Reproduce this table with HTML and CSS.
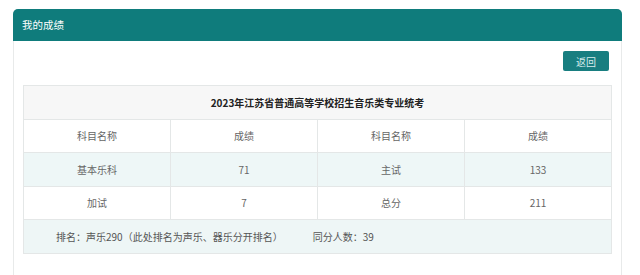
FILE: index.html
```html
<!DOCTYPE html>
<html lang="zh-CN">
<head>
<meta charset="utf-8">
<title>我的成绩</title>
<link rel="stylesheet" href="styles.css">
</head>
<body>
<div class="panel">
  <div class="panel-head">我的成绩</div>
  <div class="panel-body">
    <div class="toolbar"><button class="btn">返回</button></div>
    <table class="score">
      <tr class="title-row"><td colspan="4">2023年江苏省普通高等学校招生音乐类专业统考</td></tr>
      <tr class="head-row"><td>科目名称</td><td>成绩</td><td>科目名称</td><td>成绩</td></tr>
      <tr class="alt"><td>基本乐科</td><td>71</td><td>主试</td><td>133</td></tr>
      <tr><td>加试</td><td>7</td><td>总分</td><td>211</td></tr>
      <tr class="foot-row"><td colspan="4"><span class="rank">排名：声乐290（此处排名为声乐、器乐分开排名）</span><span>同分人数：39</span></td></tr>
    </table>
  </div>
</div>
</body>
</html>
```
FILE: styles.css
```css
html, body {
  margin: 0;
  padding: 0;
  background: #ffffff;
  font-family: "Noto Sans CJK SC", "Noto Sans", sans-serif;
}
body {
  padding: 9px 18px 0 13px;
  height: 275px;
  box-sizing: border-box;
  overflow: hidden;
}
.panel {
  border: 1px solid #e8eaea;
  border-bottom: none;
  border-radius: 5px 5px 0 0;
  height: 266px;
  box-sizing: border-box;
}
.panel-head {
  background: #0f7c7c;
  color: #ffffff;
  font-size: 10.5px;
  height: 32px;
  line-height: 32px;
  padding-left: 9px;
  margin: -1px -1px 0 -1px;
  border-radius: 5px 5px 0 0;
}
.panel-body {
  padding: 10px 9px 0 9px;
}
.toolbar {
  display: flex;
  justify-content: flex-end;
  padding-right: 3px;
  margin-bottom: 14px;
}
.btn {
  background: #187e80;
  color: #d6ecec;
  border: none;
  border-radius: 2px;
  width: 46px;
  height: 20px;
  font-family: inherit;
  font-size: 10px;
  padding: 0;
}
.score {
  width: 100%;
  border-collapse: collapse;
  table-layout: fixed;
  font-size: 10px;
  color: #666666;
}
.score td {
  border: 1px solid #e4e7e7;
  height: 32.5px;
  padding: 0;
  text-align: center;
}
.title-row td {
  background: #f7f7f7;
  color: #222222;
  font-weight: bold;
  font-size: 10px;
}
.alt td {
  background: #eef7f7;
}
.foot-row td {
  background: #eef6f6;
  text-align: left;
  padding-left: 32px;
  color: #555555;
  font-size: 10px;
}
.rank {
  margin-right: 30px;
}
```
